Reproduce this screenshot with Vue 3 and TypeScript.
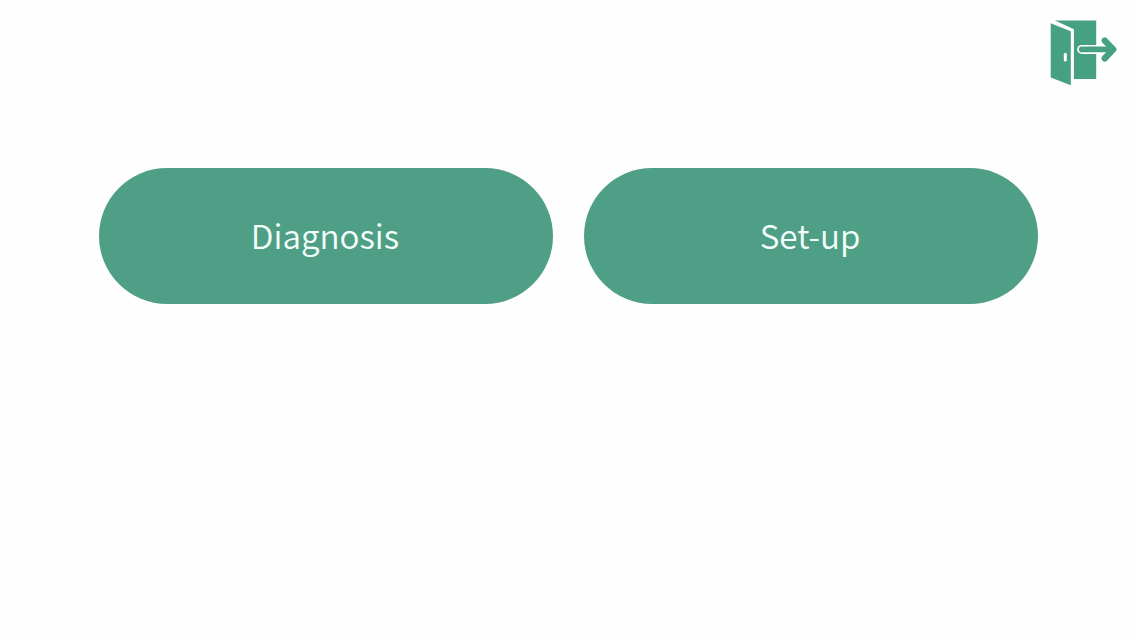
<script setup lang="ts">
interface MenuItem {
   slug: string
   label: string
}

const items: MenuItem[] = [
   { slug: 'diagnosis', label: 'Diagnosis' },
   { slug: 'setup', label: 'Set-up' },
]
</script>


<template>

   <main class="home">

      <header class="top_bar">
         <button class="exit_btn" type="button" aria-label="Exit">
            <svg class="exit_icon" viewBox="0 0 68 66">
               <!-- door frame -->
               <path class="fill" d="M5 .4H46.2V59H23.9V9.2Z" />
               <!-- open door -->
               <path class="fill" d="M.7 3.2L20.8 11.3V65.3L.7 57.4Z" />
               <rect class="handle" x="13.8" y="32.8" width="3" height="8.6" rx="1.5" />
               <!-- arrow -->
               <path class="arrow_gap" d="M31.7 29.4H46.2" />
               <path class="arrow" d="M31.7 29.4H62" />
               <path class="arrow head" d="M54.8 20.6L63.2 29.4L54.8 38.3" />
            </svg>
         </button>
      </header>

      <nav class="menu">
         <button v-for="item in items" :key="item.slug" class="menu_btn" type="button">
            {{ item.label }}
         </button>
      </nav>

   </main>

</template>


<style>
body {
   margin:0;
   background:#fefefe;
}
</style>

<style scoped>

.home {
   display:flex;
   flex-direction:column;
   gap:82px;
   box-sizing:border-box;
   width:100%;
   height:100vh;
   padding-top:20px;
}

.top_bar {
   display:flex;
   justify-content:flex-end;
   padding-right:18px;
}

button {
   margin:0;
   padding:0;
   border:none;
   cursor:pointer;
}

.exit_btn {
   width:68px;
   height:66px;
   background:none;
}
.exit_icon {
   display:block;
   width:68px;
   height:66px;
}
.fill {
   fill:#46a082;
}
.handle {
   fill:#fefefe;
}
.arrow, .arrow_gap {
   fill:none;
   stroke:#46a082;
   stroke-width:5.6;
   stroke-linecap:round;
   stroke-linejoin:round;
}
.arrow_gap {
   stroke:#fefefe;
   stroke-width:9;
}
.head {
   stroke-width:6.4;
}

.menu {
   display:flex;
   justify-content:center;
   gap:31px;
}
.menu_btn {
   width:454px;
   height:136px;
   padding-right:1px;
   padding-bottom:3px;
   border-radius:68px;
   background:#4f9f86;
   color:#f4fffb;
   font-family:"Noto Sans CJK SC", "Noto Sans", sans-serif;
   font-size:33.2px;
   font-weight:350;
   line-height:1;
}

</style>
